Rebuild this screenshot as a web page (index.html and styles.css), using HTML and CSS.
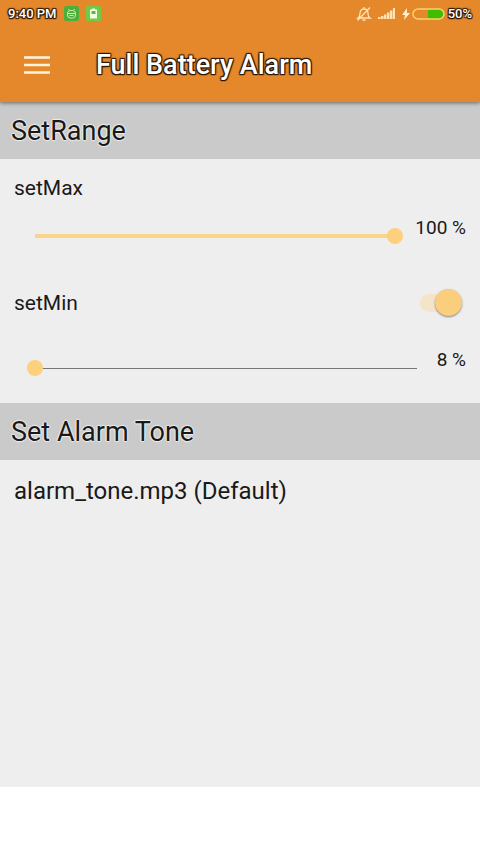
FILE: index.html
```html
<!DOCTYPE html>
<html lang="en">
<head>
<meta charset="utf-8">
<meta name="viewport" content="width=device-width, initial-scale=1">
<title>Full Battery Alarm</title>
<link rel="stylesheet" href="styles.css">
</head>
<body>
<header class="top">
  <div class="status">
    <span class="status-text">9:40 PM</span>
    <svg class="note" width="15" height="15" viewBox="0 0 15 15" aria-hidden="true">
      <rect width="15" height="15" rx="2" fill="#4fae3a"/>
      <path d="M4.500 3l1 1.500M10.500 3L9.500 4.500" stroke="#c9efb0"/>
      <rect x="3.500" y="4.500" width="8" height="7.500" rx="3" fill="none" stroke="#c9efb0"/>
      <path d="M3.500 7.500h8M5.500 9.500h4" stroke="#c9efb0"/>
    </svg>
    <svg class="note" width="15" height="15" viewBox="0 0 15 15" aria-hidden="true">
      <rect width="15" height="15" rx="2" fill="#6fcb40"/>
      <path d="M6 2.500h3v1h2v9H4v-9h2z" fill="#f3ffe6"/>
      <path d="M5.500 5h4v3h-4z" fill="#6fae48"/>
    </svg>
    <span class="spacer"></span>
    <svg width="16" height="16" viewBox="0 0 16 16" fill="none" stroke="#ffe3b5" stroke-width="1.300" aria-hidden="true">
      <path d="M2 12h12c-1.500-1-2-2-2-4.500C12 4.500 10.500 3 8 3S4 4.500 4 7.500C4 10 3.500 11 2 12zM8 1v2M6.500 14h3M1.500 14.500L14 1.500"/>
    </svg>
    <svg class="signal" width="17" height="12" viewBox="0 0 17 12" fill="#ffe3b5" aria-hidden="true">
      <path d="M0 9h2.500v2H0zM3 8h2.500v3H3zM6 6.500h2.500V11H6zM9 4.500h2.500V11H9zM12 2.500h2.500V11H12zM15 0h2v11h-2z"/>
    </svg>
    <svg class="bolt" width="8" height="12" viewBox="0 0 8 12" fill="#fff0c8" aria-hidden="true"><path d="M5 0L0 7h3L2 12l6-7H5z"/></svg>
    <svg class="battery" width="33" height="12" viewBox="0 0 33 12" aria-hidden="true">
      <path d="M16 1h10.500a5 5 0 0 1 0 10H16z" fill="#3fbd00"/>
      <rect x="1" y="1" width="31" height="10" rx="5" fill="none" stroke="#ffcf70" stroke-width="1.500"/>
    </svg>
    <span class="status-text">50%</span>
  </div>
  <div class="app-bar">
    <button class="menu" type="button" aria-label="Open menu">
      <svg width="26" height="18" viewBox="0 0 26 18" aria-hidden="true"><path d="M0 1.500h26M0 9h26M0 16.500h26" stroke="#fff3dc" stroke-width="2.600"/></svg>
    </button>
    <h1 class="title">Full Battery Alarm</h1>
  </div>
</header>
<main class="content">
  <section>
    <h2 class="heading">SetRange</h2>
    <div class="ranges">
      <div class="row"><label for="max">setMax</label></div>
      <div class="slider-row">
        <input class="slider slider-full" id="max" type="range" min="0" max="100" value="100">
        <output for="max">100 %</output>
      </div>
      <div class="row row-second">
        <label for="min">setMin</label>
        <input class="switch" type="checkbox" role="switch" aria-label="Enable setMin" checked>
      </div>
      <div class="slider-row">
        <input class="slider" id="min" type="range" min="8" max="100" value="8">
        <output for="min">8 %</output>
      </div>
    </div>
  </section>
  <section>
    <h2 class="heading">Set Alarm Tone</h2>
    <button class="tone" type="button">alarm_tone.mp3 (Default)</button>
  </section>
</main>
<footer class="bottom"></footer>
</body>
</html>
```
FILE: styles.css
```css
* { box-sizing: border-box; }
body {
  margin: 0;
  min-height: 100vh;
  display: flex;
  flex-direction: column;
  background: #fff;
  color: #191919;
  font-family: Roboto, "Liberation Sans", sans-serif;
}
.top {
  position: relative;
  background: #e4882b;
  box-shadow: 0 1px 4px rgba(0, 0, 0, .5);
}
.status {
  display: flex;
  align-items: center;
  height: 27px;
  padding: 0 8px;
}
.status-text, .title {
  color: #fff;
  text-shadow: -1px -1px 1px #2b1605, 1px -1px 1px #2b1605, -1px 1px 1px #2b1605, 1px 1px 1px #2b1605, 0 1px 1px #2b1605;
}
.status-text {
  font-size: 13px;
  font-weight: 500;
}
.note { margin-left: 7px; }
.spacer { flex: 1; }
.signal { margin-left: 6px; }
.bolt { margin-left: 7px; }
.battery { margin: 0 3px 0 2px; }
.app-bar {
  display: flex;
  align-items: center;
  height: 75px;
  padding: 0 24px;
}
.menu {
  display: flex;
  padding: 0;
  border: 0;
  background: none;
}
.title {
  margin: 0 0 0 46px;
  font-size: 27px;
  font-weight: 500;
}
.content {
  flex: 1;
  background: #eee;
}
.heading {
  margin: 0;
  padding: 2px 11px 0;
  background: #cacaca;
  font-size: 27px;
  font-weight: 400;
  line-height: 55px;
  text-shadow: -1px 0 1px #eee, 1px 0 1px #eee, 0 -1px 1px #eee, 0 1px 1px #eee;
}
.ranges { padding: 0 14px 15px; }
.row {
  display: flex;
  align-items: center;
  justify-content: space-between;
  height: 57px;
  font-size: 21px;
}
.row-second { margin: 18px 0 17px; }
.slider-row {
  display: flex;
  align-items: flex-start;
  gap: 12px;
  height: 40px;
  padding-left: 13px;
  font-size: 19px;
  line-height: 24px;
}
.slider {
  appearance: none;
  flex: 1;
  min-width: 0;
  height: 40px;
  margin: 0;
  background: none;
}
.slider::-webkit-slider-runnable-track {
  height: 16px;
  background: linear-gradient(#777, #777) center / calc(100% - 16px) 1px no-repeat;
}
.slider-full::-webkit-slider-runnable-track {
  background: linear-gradient(#f9d489, #f9d489) center / calc(100% - 16px) 4px no-repeat;
}
.slider::-webkit-slider-thumb {
  appearance: none;
  width: 16px;
  height: 16px;
  border-radius: 50%;
  background: #fdd07e;
}
.switch {
  appearance: none;
  display: flex;
  align-items: center;
  justify-content: flex-end;
  width: 42px;
  height: 18px;
  margin: 0 4px 0 0;
  border-radius: 9px;
  background: #f4e5c9;
}
.switch::before {
  content: "";
  width: 27px;
  height: 27px;
  border-radius: 50%;
  background: #fbce7e;
  box-shadow: 0 1px 2px rgba(0, 0, 0, .45);
}
.tone {
  display: block;
  width: 100%;
  padding: 0 14px;
  border: 0;
  background: none;
  color: inherit;
  font: 24px/62px Roboto, "Liberation Sans", sans-serif;
  text-align: left;
}
.bottom { height: 67px; }
```
